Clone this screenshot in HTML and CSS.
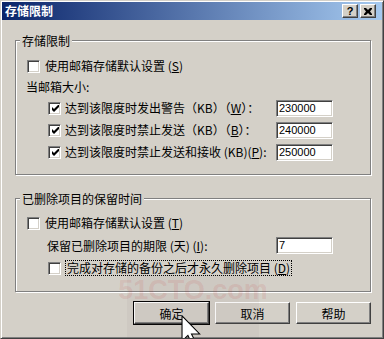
FILE: index.html
```html
<!DOCTYPE html>
<html lang="zh-CN">
<head>
    <meta charset="UTF-8">
    <meta name="viewport" content="width=device-width, initial-scale=1.0">
    <title>存储限制</title>
    <link rel="stylesheet" href="styles.css">
</head>
<body>
    <div class="window">
        <div class="titlebar">
            <span class="title">存储限制</span>
            <div class="caption-btns">
                <span class="cap-btn help">?</span>
                <span class="cap-btn close">
                    <svg width="8" height="7" viewBox="0 0 8 7"><path d="M0 0h2l2 2 2-2h2v1L6 3.5 8 6v1H6L4 5 2 7H0V6l2-2.5L0 1z" fill="#000"/></svg>
                </span>
            </div>
        </div>

        <div class="dialog">
            <fieldset class="group limits">
                <legend>存储限制</legend>
                <div class="row top">
                    <span class="check"></span>
                    <span class="label">使用邮箱存储默认设置 (<u>S</u>)</span>
                </div>
                <div class="row caption">当邮箱大小:</div>
                <div class="row sub">
                    <span class="check on"><svg width="7" height="7" viewBox="0 0 7 7"><path d="M0 2v3l2 2 5-5V-1L2 4z" fill="#000"/></svg></span>
                    <span class="label">达到该限度时发出警告（KB）（<u>W</u>）：</span>
                    <span class="edit">230000</span>
                </div>
                <div class="row sub">
                    <span class="check on"><svg width="7" height="7" viewBox="0 0 7 7"><path d="M0 2v3l2 2 5-5V-1L2 4z" fill="#000"/></svg></span>
                    <span class="label">达到该限度时禁止发送（KB）（<u>B</u>）：</span>
                    <span class="edit">240000</span>
                </div>
                <div class="row sub">
                    <span class="check on"><svg width="7" height="7" viewBox="0 0 7 7"><path d="M0 2v3l2 2 5-5V-1L2 4z" fill="#000"/></svg></span>
                    <span class="label">达到该限度时禁止发送和接收 (KB)(<u>P</u>):</span>
                    <span class="edit">250000</span>
                </div>
            </fieldset>

            <fieldset class="group deleted">
                <legend>已删除项目的保留时间</legend>
                <div class="row top">
                    <span class="check"></span>
                    <span class="label">使用邮箱存储默认设置 (<u>T</u>)</span>
                </div>
                <div class="row days">
                    <span class="label">保留已删除项目的期限 (天) (<u>I</u>):</span>
                    <span class="edit">7</span>
                </div>
                <div class="row sub backup">
                    <span class="check"></span>
                    <span class="label focus">完成对存储的备份之后才永久删除项目 (<u>D</u>)</span>
                </div>
            </fieldset>

            <div class="buttons">
                <button class="btn default">确定</button>
                <button class="btn">取消</button>
                <button class="btn">帮助</button>
            </div>
        </div>

        <div class="watermark">
            <span class="wm-logo">51CTO.com</span>
        </div>

        <svg class="cursor" width="20" height="31" viewBox="0 0 12 19">
            <path d="M0.5 0.5V16l3.6-3.5 3 6.2 2.2-1-3-6.1h5z" fill="#fff" stroke="#000" stroke-width="0.65" stroke-linejoin="miter"/>
        </svg>
    </div>
</body>
</html>
```

FILE: styles.css
```css
body{
    margin: 0;
    background-color: #d4d0c8;
}

.window{
    position: relative;
    width: 384px;
    height: 339px;
    box-sizing: border-box;
    overflow: hidden;
    padding: 1px;
    background-color: #d4d0c8;
    border: 1px solid;
    border-color: #d4d0c8 #404040 #404040 #d4d0c8;
    box-shadow: inset 1px 1px 0 #fff, inset -1px -1px 0 #808080;
    font-family: "Noto Sans CJK SC", "Noto Sans", sans-serif;
    font-size: 12px;
    line-height: 14px;
    color: #000;
}

.titlebar{
    height: 18px;
    display: flex;
    align-items: center;
    justify-content: space-between;
    padding: 0 6px 0 3px;
    background: linear-gradient(to right, #0a246a, #a6caf0);
}

.title{
    color: #fff;
    font-weight: bold;
    font-size: 12px;
}

.caption-btns{
    display: flex;
    gap: 2px;
}

.cap-btn{
    width: 16px;
    height: 14px;
    box-sizing: border-box;
    display: flex;
    align-items: center;
    justify-content: center;
    background-color: #d4d0c8;
    border: 1px solid;
    border-color: #fff #404040 #404040 #fff;
    box-shadow: inset -1px -1px 0 #808080;
    font-family: "Liberation Sans", sans-serif;
    font-weight: bold;
    font-size: 11px;
    line-height: 12px;
}

.dialog{
    padding: 14px 11px 0 13px;
}

.group{
    margin: 0;
    padding: 0 0 11px 0;
    min-width: 0;
    border: 1px solid #808080;
    box-shadow: 1px 1px 0 #fff, inset 1px 1px 0 #fff;
}

.group legend{
    margin-left: 4px;
    padding: 0 2px;
    line-height: 13px;
    background-color: #d4d0c8;
}

.limits{
    padding-top: 8px;
}

.deleted{
    margin-top: 17px;
    padding-top: 7px;
    padding-bottom: 12px;
}

.row{
    display: flex;
    align-items: center;
    height: 22px;
    padding-left: 11px;
}

.row.caption{
    height: 20px;
    padding-left: 10px;
}

.row.sub{
    padding-left: 32px;
}

.row.days{
    height: 23px;
    padding-left: 31px;
}

.check{
    width: 13px;
    height: 13px;
    box-sizing: border-box;
    flex-shrink: 0;
    display: flex;
    align-items: center;
    justify-content: center;
    background-color: #fff;
    border: 1px solid;
    border-color: #808080 #fff #fff #808080;
    box-shadow: inset 1px 1px 0 #404040, inset -1px -1px 0 #d4d0c8;
}

.check svg{
    margin: 1px 0 0 1px;
}

.label{
    flex: 1;
    margin-left: 5px;
    white-space: nowrap;
}

.row.sub .label{
    margin-left: 4px;
}

.row.days .label{
    margin-left: 0;
}

.label.focus{
    flex: none;
    margin-left: 1px;
    padding: 0 1px;
    border: 1px dotted #000;
}

.edit{
    width: 57px;
    height: 17px;
    box-sizing: border-box;
    flex-shrink: 0;
    margin-right: 37px;
    padding-left: 2px;
    background-color: #fff;
    border: 1px solid;
    border-color: #808080 #fff #fff #808080;
    box-shadow: inset 1px 1px 0 #404040, inset -1px -1px 0 #d4d0c8;
    font-family: "Liberation Sans", sans-serif;
    font-size: 11px;
    line-height: 15px;
}

.buttons{
    display: flex;
    justify-content: flex-end;
    gap: 6px;
    margin-top: 10px;
}

.btn{
    width: 75px;
    height: 22px;
    box-sizing: border-box;
    padding: 0;
    background-color: #d4d0c8;
    border: 1px solid;
    border-color: #fff #404040 #404040 #fff;
    box-shadow: inset -1px -1px 0 #808080;
    font-family: "Noto Sans CJK SC", sans-serif;
    font-size: 12px;
    color: #000;
}

.btn.default{
    outline: 1px solid #000;
    outline-offset: 0;
}

.watermark{
    position: absolute;
    left: 126px;
    top: 274px;
    width: 132px;
    height: 65px;
    display: flex;
    flex-direction: column;
    align-items: center;
    background-color: rgba(120, 110, 110, 0.06);
    pointer-events: none;
}

.wm-logo{
    font-family: "Liberation Sans", sans-serif;
    font-weight: bold;
    font-size: 27px;
    line-height: 30px;
    color: rgba(200, 40, 40, 0.11);
}

.cursor{
    position: absolute;
    left: 180px;
    top: 314px;
}
```
